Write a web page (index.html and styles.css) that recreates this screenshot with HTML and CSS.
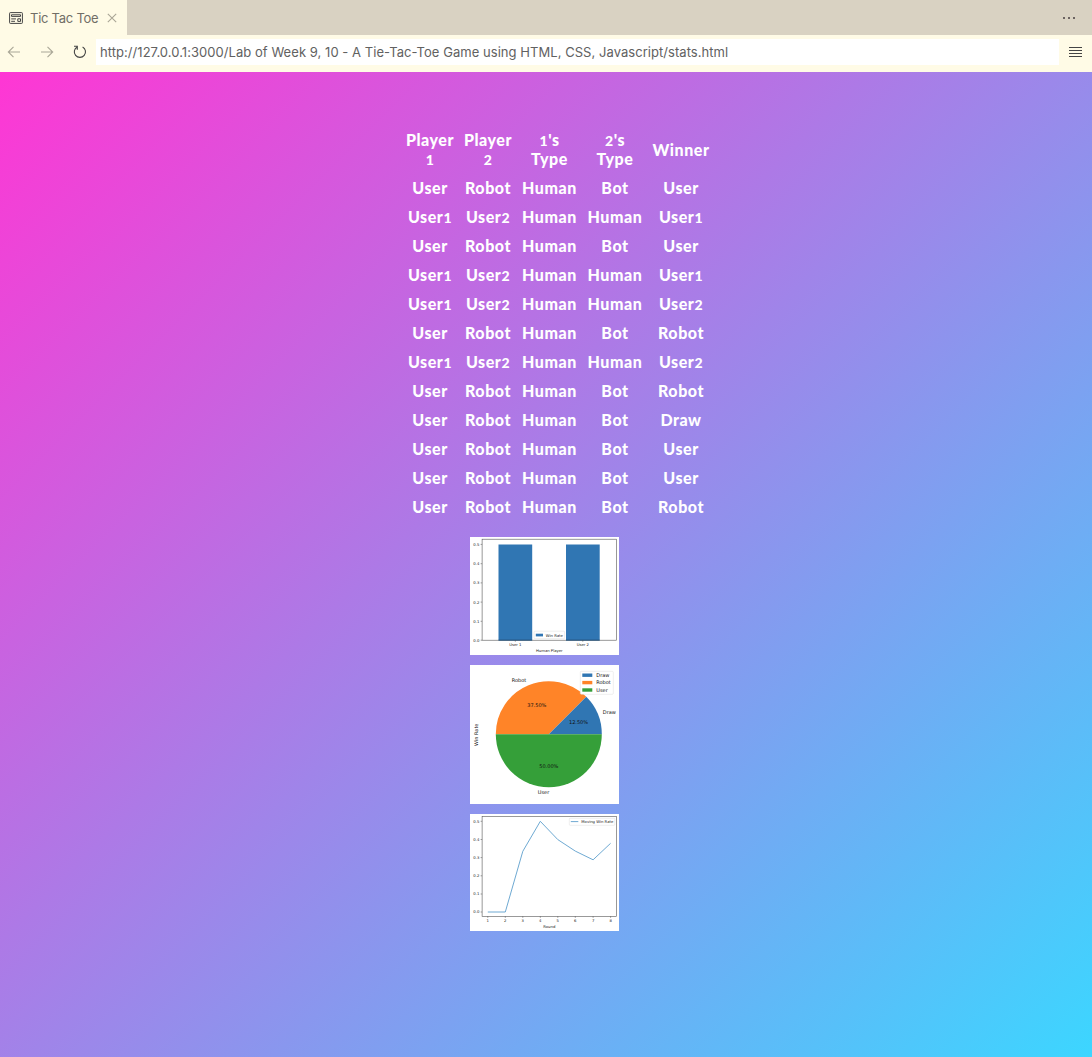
FILE: index.html
```html
<!DOCTYPE html>
<html lang="en">
<head>
<meta charset="utf-8">
<title>Tic Tac Toe</title>
<link rel="stylesheet" href="styles.css">
</head>
<body>
<header class="tabs">
  <div class="tab">
    <svg class="tab-icon" width="14" height="12" viewBox="0 0 14 12"><rect x=".6" y=".6" width="12.8" height="10.8" rx=".7"/><path d="M2.500 2.800h9v1.600h-9zM2.200 6.900h4.800M2.200 9.300h3.800M8.800 6.800h2.700v2.600H8.800z"/></svg>
    <span class="tab-title">Tic Tac Toe</span>
    <svg class="close" width="10" height="10" viewBox="0 0 10 10"><path d="M.8.8l8.400 8.400M9.200.8L.8 9.200"/></svg>
  </div>
  <div class="more"><i></i><i></i><i></i></div>
</header>
<nav class="toolbar">
  <svg class="arrow" width="14" height="12" viewBox="0 0 14 12"><path d="M13 6H1.500M6.500.8L1.300 6l5.200 5.200"/></svg>
  <svg class="arrow forward" width="14" height="12" viewBox="0 0 14 12"><path d="M1 6h11.500M7.500.8L12.700 6l-5.200 5.200"/></svg>
  <svg class="reload" width="14" height="14" viewBox="0 0 14 14"><path d="M1 1.200h3.300V4.700M4.200 1.900A5.600 5.600 0 1 0 9.600 1.900"/></svg>
  <div class="address">http://127.0.0.1:3000/Lab of Week 9, 10 - A Tie-Tac-Toe Game using HTML, CSS, Javascript/stats.html</div>
  <div class="menu"><i></i><i></i><i></i><i></i></div>
</nav>
<main class="page">
  <table class="results">
    <colgroup><col class="player"><col class="player"><col class="type1"><col class="type"><col class="type"></colgroup>
    <thead>
    <tr><th>Player<br><b>1</b></th><th>Player<br><b>2</b></th><th><b>1</b>'s<br>Type</th><th><b>2</b>'s<br>Type</th><th>Winner</th></tr>
    </thead>
    <tbody>
    <tr><td>User</td><td>Robot</td><td>Human</td><td>Bot</td><td>User</td></tr>
    <tr><td>User<b>1</b></td><td>User<b>2</b></td><td>Human</td><td>Human</td><td>User<b>1</b></td></tr>
    <tr><td>User</td><td>Robot</td><td>Human</td><td>Bot</td><td>User</td></tr>
    <tr><td>User<b>1</b></td><td>User<b>2</b></td><td>Human</td><td>Human</td><td>User<b>1</b></td></tr>
    <tr><td>User<b>1</b></td><td>User<b>2</b></td><td>Human</td><td>Human</td><td>User<b>2</b></td></tr>
    <tr><td>User</td><td>Robot</td><td>Human</td><td>Bot</td><td>Robot</td></tr>
    <tr><td>User<b>1</b></td><td>User<b>2</b></td><td>Human</td><td>Human</td><td>User<b>2</b></td></tr>
    <tr><td>User</td><td>Robot</td><td>Human</td><td>Bot</td><td>Robot</td></tr>
    <tr><td>User</td><td>Robot</td><td>Human</td><td>Bot</td><td>Draw</td></tr>
    <tr><td>User</td><td>Robot</td><td>Human</td><td>Bot</td><td>User</td></tr>
    <tr><td>User</td><td>Robot</td><td>Human</td><td>Bot</td><td>User</td></tr>
    <tr><td>User</td><td>Robot</td><td>Human</td><td>Bot</td><td>Robot</td></tr>
    </tbody>
  </table>
  <div class="charts">
    <svg class="chart" width="149" height="118" viewBox="470.200 537.300 149 118">
      <path class="bar" d="M498.700 544.700h33.700V640.500h-33.700zM566.200 544.700h33.700V640.500h-33.700z"/>
      <rect class="axes" x="482.300" y="539.500" width="134.500" height="101"/>
      <path class="base" d="M498.700 640.500h33.700M566.200 640.500h33.700"/>
      <path class="ticks" d="M480.800 544.700h1.500M480.800 564h1.500M480.800 583.200h1.500M480.800 602.400h1.500M480.800 621.600h1.500M480.800 640.500h1.500M515.500 640.500v1.500M583 640.500v1.500"/>
      <g class="end"><text x="479.500" y="546.200">0.5</text><text x="479.500" y="565.500">0.4</text><text x="479.500" y="584.700">0.3</text><text x="479.500" y="603.900">0.2</text><text x="479.500" y="623.100">0.1</text><text x="479.500" y="642">0.0</text></g>
      <g class="mid"><text x="515.500" y="646.500">User 1</text><text x="583" y="646.500">User 2</text><text x="549.500" y="652.300">Human Player</text></g>
      <rect class="legend" x="534.300" y="631.500" width="30.500" height="7.500" rx=".8"/><rect class="blue" x="536" y="634" width="7.200" height="2.700"/><text x="546" y="636.900">Win Rate</text>
    </svg>
    <svg class="chart pie" width="149" height="139" viewBox="470.200 665.200 149 139">
      <path class="orange" d="M549 734.500L586.500 697A53 53 0 0 0 496 734.500z"/>
      <path class="blue" d="M549 734.500h53A53 53 0 0 0 586.500 697z"/>
      <path class="green" d="M496 734.500a53 53 0 0 0 106 0z"/>
      <rect class="legend" x="580.500" y="671.500" width="33" height="23" rx="1"/>
      <rect class="blue" x="582.500" y="673.700" width="10" height="3.400"/><rect class="orange" x="582.500" y="681.100" width="10" height="3.400"/><rect class="green" x="582.500" y="688.500" width="10" height="3.400"/>
      <text x="596.500" y="677.300">Draw</text><text x="596.500" y="684.700">Robot</text><text x="596.500" y="692.100">User</text>
      <text x="603" y="714.500">Draw</text><text x="512" y="682.700">Robot</text><text x="538" y="794.300">User</text>
      <g class="mid"><text x="537" y="707">37.50%</text><text x="578.700" y="724.300">12.50%</text><text x="549" y="768">50.00%</text><text transform="translate(478 735) rotate(-90)">Win Rate</text></g>
    </svg>
    <svg class="chart" width="149" height="117" viewBox="470.200 814.200 149 117">
      <rect class="axes" x="482.300" y="816.700" width="134.500" height="99.800"/>
      <path class="line" d="M488 912.200h17.500L523 851.500l17.500-30 17.500 18.300 17.500 11.500L593.300 860l17.500-16.500"/>
      <path class="ticks" d="M480.800 821.500h1.500M480.800 839.700h1.500M480.800 857.800h1.500M480.800 876h1.500M480.800 894.200h1.500M480.800 912.200h1.500M488 916.500v1.500M505.500 916.500v1.500M523 916.500v1.500M540.500 916.500v1.500M558 916.500v1.500M575.500 916.500v1.500M593.300 916.500v1.500M610.800 916.500v1.500"/>
      <g class="end"><text x="479.500" y="823">0.5</text><text x="479.500" y="841.200">0.4</text><text x="479.500" y="859.300">0.3</text><text x="479.500" y="877.500">0.2</text><text x="479.500" y="895.700">0.1</text><text x="479.500" y="913.700">0.0</text></g>
      <g class="mid"><text x="488" y="922.700">1</text><text x="505.500" y="922.700">2</text><text x="523" y="922.700">3</text><text x="540.500" y="922.700">4</text><text x="558" y="922.700">5</text><text x="575.500" y="922.700">6</text><text x="593.300" y="922.700">7</text><text x="610.800" y="922.700">8</text><text x="549.500" y="928.300">Round</text></g>
      <rect class="legend" x="569.500" y="818.500" width="45.500" height="7" rx=".8"/><path class="line" d="M571 821.800h7.500"/><text x="581.500" y="823.500" textLength="32">Moving Win Rate</text>
    </svg>
  </div>
</main>
</body>
</html>
```

FILE: styles.css
```css
* { box-sizing: border-box; }
body { margin: 0; height: 1057px; display: flex; flex-direction: column; overflow: hidden; background: #fffbe6; }
svg { display: block; flex: none; }
.tabs { height: 35px; flex: none; display: flex; justify-content: space-between; background: #d9d2c2; font-family: Inter, sans-serif; }
.tab { width: 127px; display: flex; align-items: center; padding-left: 9px; background: #fffbe6; }
.tab-icon { fill: none; stroke: #444; stroke-width: 1; }
.tab-title { width: 70px; margin-left: 7px; white-space: nowrap; font-size: 13px; letter-spacing: -.25px; color: #716e66; }
.close { margin-left: 7px; fill: none; stroke: #aaa696; stroke-width: 1.1; }
.more { display: flex; gap: 3px; padding: 17px 17px 0 0; }
.more i { width: 2px; height: 2px; background: #6c6461; }
.toolbar { height: 37px; flex: none; display: flex; align-items: center; padding: 0 10px 4px 7px; }
.toolbar svg { fill: none; stroke: #aaa797; stroke-width: 1.1; }
.toolbar .forward { margin-left: 19px; }
.toolbar .reload { margin-left: 19px; stroke: #444; stroke-width: 1.1; }
.address { width: 963px; height: 26px; margin-left: 9px; margin-top: 1px; padding-left: 4px; background: #fff; color: #616161; font: 13px/26px Inter, sans-serif; letter-spacing: .05px; white-space: nowrap; }
.menu { width: 13px; margin-left: 10px; display: grid; gap: 2px; }
.menu i { height: 1px; background: #444; }
.page { flex: 1; display: flex; flex-direction: column; align-items: center; padding-top: 53px; background: linear-gradient(135deg, #ff36d4, #3cd6ff); }
.results { width: 313px; margin-left: 23px; table-layout: fixed; border-collapse: collapse; color: #fff; font: 900 16px/19px Lato, sans-serif; letter-spacing: .55px; text-align: center; }
.player { width: 58px; }
.type1 { width: 65px; }
.type { width: 66px; }
.results th, .results td { height: 29px; padding: 0; font-weight: 900; white-space: nowrap; }
.results th { height: 48px; }
.results b { font-size: 14px; line-height: 1; font-weight: 900; }
.charts { display: flex; flex-direction: column; gap: 10px; margin: 16px 3px 0 0; }
.chart { background: #fff; font-family: "DejaVu Sans", sans-serif; }
.chart text { font-size: 3.8px; fill: #222; }
.pie text { font-size: 5px; fill: #111; }
.mid { text-anchor: middle; }
.end { text-anchor: end; }
.bar, .blue { fill: #3076b3; }
.orange { fill: #ff8428; }
.green { fill: #359f39; }
.axes { fill: none; stroke: #555; stroke-width: .6; }
.base { stroke: #174b78; stroke-width: .8; }
.ticks { stroke: #444; stroke-width: .5; }
.legend { fill: #fff; stroke: #ddd; stroke-width: .5; }
.line { fill: none; stroke: #5e9fcd; stroke-width: .9; stroke-linejoin: round; }
```
